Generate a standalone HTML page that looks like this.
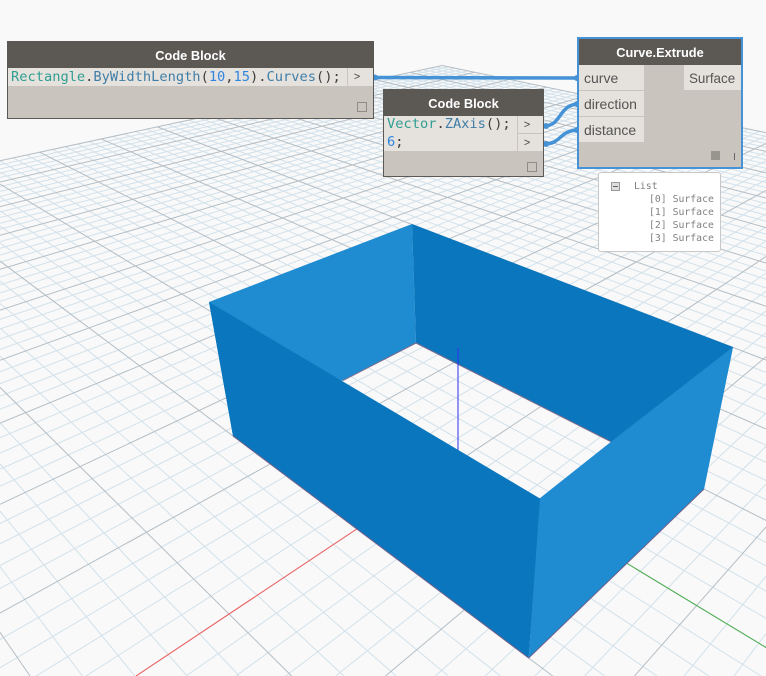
<!DOCTYPE html>
<html><head><meta charset="utf-8"><style>
html,body{margin:0;padding:0;background:#f9f9f9;width:766px;height:676px;overflow:hidden}
#w{position:relative;width:766px;height:676px;overflow:hidden;background:#f9f9f9;font-family:"Liberation Sans",sans-serif}
svg{position:absolute;left:0;top:0;overflow:hidden}
.n{position:absolute;background:#c9c4bd;box-sizing:border-box;border:1px solid #5c5955}
.h{position:absolute;left:0;right:0;top:0;background:#5c5955;color:#fff;font-weight:bold;font-size:12.8px;text-align:center}
.c{position:absolute;background:#e5e1dc}
.m{font-family:"DejaVu Sans Mono",monospace;font-size:13.7px;white-space:pre;color:#3d3d3d}
.t{color:#2f9e93}.b{color:#3f7ea8}.u{color:#2f86e0}
.p{position:absolute;background:#e5e1dc;color:#555;font-size:14px;line-height:27px;padding-left:5px;box-sizing:border-box}
.a{position:absolute;font-family:"Liberation Mono",monospace;font-size:11px;color:#444;text-align:center}
.s{position:absolute;width:8px;height:8px;border:1px solid #8f8b85}
#pv{position:absolute;left:598px;top:172px;width:123px;height:80px;background:#fff;border:1px solid #c8c8c8;border-radius:3px;box-sizing:border-box;font-family:"DejaVu Sans Mono",monospace;font-size:9.8px;color:#808080}
#pv div{position:absolute;white-space:pre}
</style></head><body><div id="w">
<svg id="g" width="766" height="676" viewBox="0 0 766 676"></svg>
<svg width="766" height="676" viewBox="0 0 766 676">
<polygon points="209,302 412,224 416,343 233,436" fill="#1f8bd1"/>
<polygon points="412,224 733,347 704,489 416,343" fill="#0a76bd"/>
<path d="M416,343 L342.7,380.7 M416,343 L611,441.7" stroke="#7a6a8c" stroke-width="1" fill="none"/>
</svg>
<svg width="766" height="676" viewBox="0 0 766 676">
<line x1="458" y1="348" x2="458" y2="450" stroke="#3030f0" stroke-width="1"/>
<polygon points="733,347 704,489 528.7,658 539.5,498.5 611,441.7" fill="#1f8bd1"/>
<polygon points="209,302 540,498.5 528.7,658 233,436" fill="#0a76bd"/>
<path d="M233,436 L528.7,658 L704,489" stroke="#6f5f8a" stroke-width="1" fill="none"/>
<g fill="none" stroke="#4592d6" stroke-width="3.5">
<path d="M373,77.5 L578,78"/>
<path d="M544,126 C562,126 558,105 578,104"/>
<path d="M544,144 C562,144 558,131 578,130"/>
</g>
<g fill="#4592d6">
<circle cx="375" cy="77.5" r="3"/><circle cx="546" cy="126" r="3"/><circle cx="546" cy="144" r="3"/>
<circle cx="577" cy="78" r="3"/><circle cx="577" cy="104" r="3"/><circle cx="577" cy="130" r="3"/>
</g>
</svg>

<div class="n" style="left:7px;top:41px;width:367px;height:78px">
<div class="h" style="height:27px;line-height:29px;left:-1px;right:-1px;top:-1px">Code Block</div>
<div class="c m" style="left:0;top:26px;width:339px;height:18px;line-height:19px;padding-left:3px;box-sizing:border-box"><span class="t">Rectangle</span>.<span class="b">ByWidthLength</span>(<span class="u">10</span>,<span class="u">15</span>).<span class="b">Curves</span>();</div>
<div class="c" style="left:340px;top:26px;width:25px;height:18px"></div>
<div class="a" style="left:339px;top:29px;width:20px;line-height:15px">&gt;</div>
<div class="s" style="left:349px;top:60px"></div>
</div>

<div class="n" style="left:383px;top:89px;width:161px;height:88px">
<div class="h" style="height:27px;line-height:29px;left:-1px;right:-1px;top:-1px">Code Block</div>
<div class="c m" style="left:0;top:26px;width:133px;height:35px;line-height:17.5px;padding:0 0 0 3px;box-sizing:border-box"><span class="t">Vector</span>.<span class="b">ZAxis</span>();
<span class="u">6</span>;</div>
<div class="c" style="left:134px;top:26px;width:25px;height:17px"></div>
<div class="c" style="left:134px;top:44px;width:25px;height:17px"></div>
<div class="a" style="left:133px;top:29px;width:20px;line-height:15px">&gt;</div>
<div class="a" style="left:133px;top:47px;width:20px;line-height:15px">&gt;</div>
<div class="s" style="left:143px;top:72px"></div>
</div>

<div style="position:absolute;left:577px;top:37px;width:166px;height:132px;box-sizing:border-box;border:2px solid #4592d6;background:#c9c4bd">
<div class="h" style="height:26px;line-height:28px">Curve.Extrude</div>
<div class="p" style="left:0;top:26px;width:65px;height:25px">curve</div>
<div class="p" style="left:0;top:52px;width:65px;height:25px">direction</div>
<div class="p" style="left:0;top:78px;width:65px;height:25px">distance</div>
<div class="p" style="left:105px;top:26px;width:57px;height:25px;font-size:13.4px">Surface</div>
<div style="position:absolute;left:132px;top:112px;width:9px;height:9px;background:#98948e;border:0"></div>
<div style="position:absolute;left:155px;top:114px;width:1px;height:7px;background:#666"></div>
</div>

<div id="pv">
<div style="left:12px;top:9px;width:7px;height:7px;border:1px solid #999;background:#ddd"></div>
<div style="left:14px;top:13px;width:5px;height:1px;background:#666"></div>
<div style="left:35px;top:7px;line-height:13px">List</div>
<div style="left:50px;top:20px;line-height:13px">[0] Surface</div>
<div style="left:50px;top:33px;line-height:13px">[1] Surface</div>
<div style="left:50px;top:46px;line-height:13px">[2] Surface</div>
<div style="left:50px;top:59px;line-height:13px">[3] Surface</div>
</div>
</div>
<script>
(function(){
var x0=416,y0=343,x1=233,y1=436,x2=528.7,y2=658,x3=704,y3=489;
var dx1=x1-x2,dx2=x3-x2,sx=x0-x1+x2-x3,dy1=y1-y2,dy2=y3-y2,sy=y0-y1+y2-y3;
var D=dx1*dy2-dx2*dy1,g=(sx*dy2-dx2*sy)/D,h=(dx1*sy-sx*dy1)/D;
var a=x1-x0+g*x1,b=x3-x0+h*x3,c=x0,d=y1-y0+g*y1,e=y3-y0+h*y3,f=y0;
function W(X,Y){return g*(X+5)/10+h*(Y+7.5)/15+1}
function P(X,Y){var u=(X+5)/10,v=(Y+7.5)/15,w=g*u+h*v+1;return [(a*u+b*v+c)/w,(d*u+e*v+f)/w]}
function clip(p,q){
 var t0=0,t1=1,dx=q[0]-p[0],dy=q[1]-p[1];
 var ps=[-dx,dx,-dy,dy],qs=[p[0],766-p[0],p[1],676-p[1]];
 for(var i=0;i<4;i++){
  if(ps[i]===0){if(qs[i]<0)return null;continue}
  var r=qs[i]/ps[i];
  if(ps[i]<0){if(r>t0)t0=r}else{if(r<t1)t1=r}
 }
 if(t0>=t1)return null;
 return [p[0]+dx*t0,p[1]+dy*t0,p[0]+dx*t1,p[1]+dy*t1];
}
function L(A,B,C,E,col,sw){
 var w1=W(A,B),w2=W(C,E),m=0.03;
 if(w1<m&&w2<m)return '';
 if(w1<m){var t=(m-w1)/(w2-w1);A+=(C-A)*t;B+=(E-B)*t}
 else if(w2<m){var t=(m-w2)/(w1-w2);C+=(A-C)*t;E+=(B-E)*t}
 var c=clip(P(A,B),P(C,E));
 if(!c)return '';
 return '<line x1="'+c[0].toFixed(2)+'" y1="'+c[1].toFixed(2)+'" x2="'+c[2].toFixed(2)+'" y2="'+c[3].toFixed(2)+'" stroke="'+col+'" stroke-width="'+sw+'"/>';
}
var N=50,minor='',major='';
for(var i=-N;i<=N;i++){
 var mj=(i%5===0);
 var s=L(i,-N,i,N,mj?'#b4bec5':'#d2e1eb',1)+L(-N,i,N,i,mj?'#b4bec5':'#d2e1eb',1);
 if(mj)major+=s;else minor+=s;
}
var axes=L(0,0,N,0,'#f05a5a',1)+L(0,0,0,N,'#4caf50',1);
document.getElementById('g').innerHTML=minor+major+axes;
})();
</script>
</body></html>
